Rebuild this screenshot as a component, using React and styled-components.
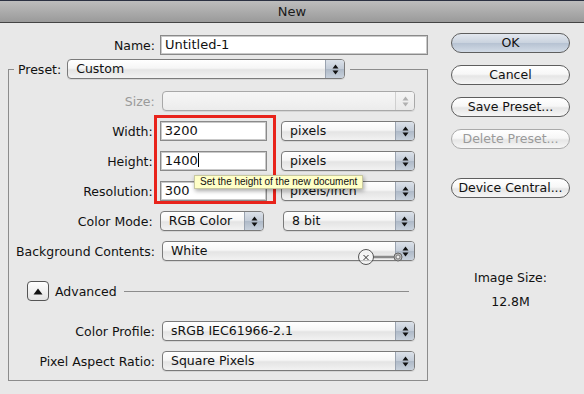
import React from "react";
import styled, { createGlobalStyle } from "styled-components";

const GlobalStyle = createGlobalStyle`
  * { box-sizing: border-box; }
  body {
    margin: 0;
    background: #e8e8e8;
    font-family: "DejaVu Sans", "Lucida Grande", sans-serif;
    font-size: 12.5px;
    color: #111;
  }
`;

const Window = styled.div`
  width: 584px;
  height: 394px;
  overflow: hidden;
  background: #e8e8e8;
`;

const TitleBar = styled.div`
  height: 23px;
  border-top: 1px solid #2b3142;
  border-bottom: 1px solid #444;
  background: linear-gradient(#bdbdbd, #9a9a9a);
  display: flex;
  align-items: center;
  justify-content: center;
  font-size: 13px;
  color: #1a1a1a;
`;

const Body = styled.div`
  display: flex;
  padding: 10px 0 0 8px;
  gap: 23px;
`;

const LeftCol = styled.div`
  width: 420px;
  padding-top: 2px;
`;

const RightCol = styled.div`
  width: 119px;
  display: flex;
  flex-direction: column;
  align-items: stretch;
`;

const Row = styled.div`
  display: flex;
  align-items: center;
  height: 20px;
  gap: ${(p) => p.$gap ?? 7}px;
  position: relative;
`;

const Label = styled.div`
  width: ${(p) => p.$w ?? 146}px;
  text-align: right;
  white-space: nowrap;
  color: ${(p) => (p.$disabled ? "#9a9a9a" : "#111")};
`;

const TextField = styled.div`
  width: ${(p) => p.$w}px;
  height: 20px;
  background: #fff;
  border: 1px solid #8a8a8a;
  box-shadow: inset 0 0 0 1px #c9c9c9;
  padding-left: 4px;
  line-height: 18px;
  font-size: 13px;
  white-space: nowrap;
`;

const Caret = styled.span`
  display: inline-block;
  width: 1px;
  height: 14px;
  background: #000;
  vertical-align: -2px;
`;

const Spacer = styled.span`
  width: ${(p) => p.$w}px;
  flex: none;
`;

const SelectBox = styled.div`
  width: ${(p) => p.$w}px;
  height: 20px;
  display: flex;
  border: 1px solid ${(p) => (p.$disabled ? "#a8a8a8" : "#7a7a7a")};
  border-radius: 4px;
  overflow: hidden;
  background: ${(p) =>
    p.$disabled
      ? "linear-gradient(#f6f6f6, #ececec)"
      : "linear-gradient(#ffffff 0%, #f6f6f6 45%, #e4e4e4 55%, #f2f2f2 100%)"};
  box-shadow: 0 1px 0 rgba(0, 0, 0, 0.08);
`;

const SelectValue = styled.div`
  flex: 1;
  padding-left: 8px;
  line-height: 18px;
  white-space: nowrap;
  overflow: hidden;
`;

const Stepper = styled.div`
  width: 19px;
  border-left: 1px solid ${(p) => (p.$disabled ? "#cfcfcf" : "#9aa3b0")};
  background: ${(p) =>
    p.$disabled
      ? "linear-gradient(#f4f4f4, #e9e9e9)"
      : "linear-gradient(#dbe1e9 0%, #c3ccd8 50%, #aeb9c7 51%, #c8d1dc 100%)"};
  display: flex;
  align-items: center;
  justify-content: center;
`;

const Arrows = ({ color }) => (
  <svg width="7" height="11" viewBox="0 0 7 11">
    <path d="M3.5 0.5 L6.5 4.5 L0.5 4.5 Z" fill={color} />
    <path d="M3.5 10.5 L6.5 6.5 L0.5 6.5 Z" fill={color} />
  </svg>
);

const Select = ({ w, value, disabled }) => (
  <SelectBox $w={w} $disabled={disabled}>
    <SelectValue>{value}</SelectValue>
    <Stepper $disabled={disabled}>
      <Arrows color={disabled ? "#b0b0b0" : "#111"} />
    </Stepper>
  </SelectBox>
);

const Group = styled.fieldset`
  margin: 4px 0 0;
  padding: 12px 12px 9px 0;
  border: 1px solid #8c8c8c;
  min-width: 0;
`;

const Legend = styled.legend`
  margin-left: 5px;
  padding: 0 5px 0 4px;
  display: flex;
  align-items: center;
  gap: 6px;
`;

const Rows = styled.div`
  display: flex;
  flex-direction: column;
  gap: 10px;
`;

const DimGroup = styled.div`
  position: relative;
  display: flex;
  flex-direction: column;
  gap: 10px;
`;

const Highlight = styled.div`
  position: absolute;
  left: 145px;
  top: -6px;
  width: 122px;
  height: 89px;
  border: 3px solid #e8231b;
  pointer-events: none;
`;

const Tooltip = styled.div`
  position: absolute;
  left: 185px;
  top: 54px;
  height: 14px;
  padding: 0 5px;
  background: #ffffc7;
  border: 1px solid #c8c8a0;
  box-shadow: 1px 2px 4px rgba(0, 0, 0, 0.35);
  font-family: "Liberation Sans", Arial, sans-serif;
  font-size: 10px;
  line-height: 12px;
  white-space: nowrap;
  z-index: 2;
`;

const SliderMark = styled.svg`
  position: absolute;
  left: 340px;
  top: 6px;
`;

const AdvancedRow = styled.div`
  display: flex;
  align-items: center;
  height: 20px;
  margin: 20px 6px 20px 18px;
`;

const Disclosure = styled.div`
  width: 22px;
  height: 20px;
  border: 1px solid #555;
  border-radius: 4px;
  background: linear-gradient(#ffffff, #e2e2e2);
  display: flex;
  align-items: center;
  justify-content: center;
  margin-right: 6px;
`;

const Rule = styled.div`
  flex: 1;
  height: 1px;
  background: #8c8c8c;
  margin-left: 7px;
`;

const Button = styled.div`
  height: 20px;
  margin-top: ${(p) => p.$mt ?? 0}px;
  border: 1px solid ${(p) => (p.$disabled ? "#aaaaaa" : "#5e5e5e")};
  border-radius: 10px;
  background: ${(p) =>
    p.$primary
      ? "linear-gradient(#e3e8ef 0%, #c9d2de 50%, #b6c2d2 51%, #d2dbe6 100%)"
      : "linear-gradient(#ffffff 0%, #f7f7f7 45%, #e6e6e6 55%, #f6f6f6 100%)"};
  color: ${(p) => (p.$disabled ? "#9a9a9a" : "#111")};
  text-align: center;
  line-height: 18px;
  white-space: nowrap;
`;

const SizeInfo = styled.div`
  margin-top: 68px;
  text-align: center;
  line-height: 24px;
`;

export default function App() {
  return (
    <Window>
      <GlobalStyle />
      <TitleBar>New</TitleBar>
      <Body>
        <LeftCol>
          <Row $gap={5}>
            <Label $w={147}>Name:</Label>
            <TextField $w={268}>Untitled-1</TextField>
          </Row>
          <Group>
            <Legend>
              <span>Preset:</span>
              <Select w={278} value="Custom" />
            </Legend>
            <Rows>
              <Row>
                <Label $disabled>Size:</Label>
                <Select w={254} value="" disabled />
              </Row>
              <DimGroup>
                <Row>
                  <Label>Width:</Label>
                  <TextField $w={109}>3200</TextField>
                  <Spacer $w={0} />
                  <Select w={136} value="pixels" />
                </Row>
                <Row>
                  <Label>Height:</Label>
                  <TextField $w={109}>
                    1400
                    <Caret />
                  </TextField>
                  <Spacer $w={0} />
                  <Select w={136} value="pixels" />
                </Row>
                <Row>
                  <Label>Resolution:</Label>
                  <TextField $w={109}>300</TextField>
                  <Spacer $w={0} />
                  <Select w={136} value="pixels/inch" />
                </Row>
                <Highlight />
                <Tooltip>Set the height of the new document</Tooltip>
              </DimGroup>
              <Row>
                <Label>Color Mode:</Label>
                <Select w={106} value="RGB Color" />
                <Spacer $w={5} />
                <Select w={134} value="8 bit" />
              </Row>
              <Row>
                <Label>Background Contents:</Label>
                <Select w={253} value="White" />
                <SliderMark width="58" height="20" viewBox="0 0 58 20">
                  <line x1="24" y1="10" x2="46" y2="10" stroke="#8a8a8a" strokeWidth="2.5" />
                  <circle cx="17" cy="10" r="7.5" fill="rgba(255,255,255,0.55)" stroke="#555" strokeWidth="1" />
                  <path d="M14.5 8 L19.5 13 M19.5 8 L14.5 13" stroke="#333" strokeWidth="1" />
                  <circle cx="49" cy="10" r="4" fill="#bbb" stroke="#666" strokeWidth="1" />
                  <circle cx="49" cy="10" r="2" fill="#eee" stroke="#666" strokeWidth="0.8" />
                </SliderMark>
              </Row>
            </Rows>
            <AdvancedRow>
              <Disclosure>
                <svg width="10" height="7" viewBox="0 0 10 7">
                  <path d="M5 0.5 L9.5 6.5 L0.5 6.5 Z" fill="#111" />
                </svg>
              </Disclosure>
              <span>Advanced</span>
              <Rule />
            </AdvancedRow>
            <Rows>
              <Row>
                <Label>Color Profile:</Label>
                <Select w={253} value="sRGB IEC61966-2.1" />
              </Row>
              <Row>
                <Label>Pixel Aspect Ratio:</Label>
                <Select w={253} value="Square Pixels" />
              </Row>
            </Rows>
          </Group>
        </LeftCol>
        <RightCol>
          <Button $primary>OK</Button>
          <Button $mt={12}>Cancel</Button>
          <Button $mt={12}>Save Preset...</Button>
          <Button $mt={12} $disabled>
            Delete Preset...
          </Button>
          <Button $mt={29}>Device Central...</Button>
          <SizeInfo>
            Image Size:
            <br />
            12.8M
          </SizeInfo>
        </RightCol>
      </Body>
    </Window>
  );
}
